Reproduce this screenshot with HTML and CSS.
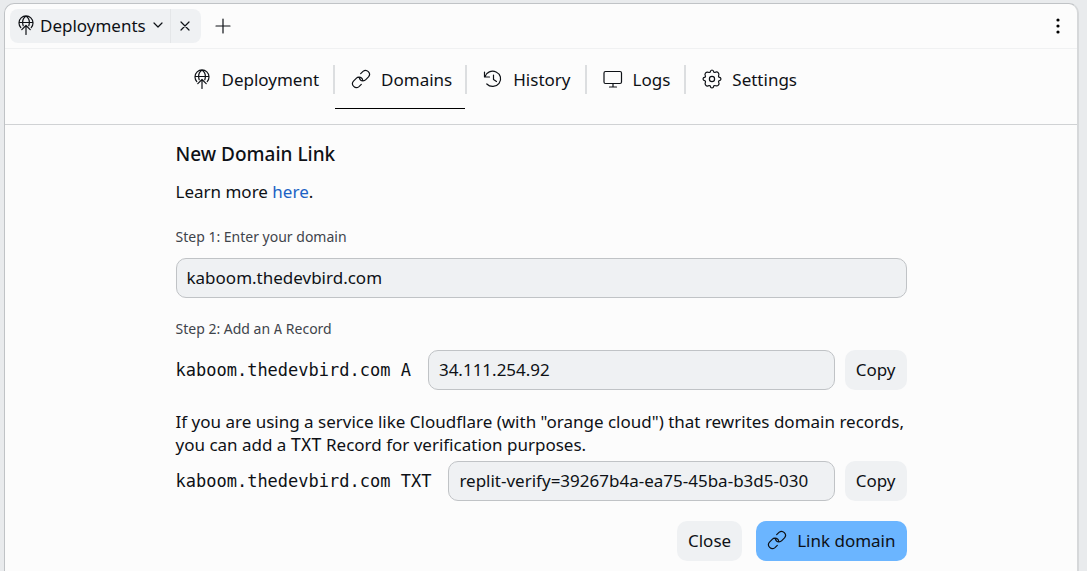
FILE: index.html
```html
<!DOCTYPE html>
<html lang="en">
<head>
<meta charset="utf-8">
<title>Deployments</title>
<link rel="stylesheet" href="styles.css">
</head>
<body>
<svg class="sprite" aria-hidden="true">
  <symbol id="deploy" viewBox="0 0 20 20">
    <path d="M4.800 12.600A7 7 0 1 1 15.200 12.600M3 7.500h14M7.200 10.800C6 7 7.200 3 10 1C12.800 3 14 7 12.800 10.800M10 19.500V10.500M5.800 14.700L10 10.500L14.200 14.700"/>
  </symbol>
  <symbol id="link" viewBox="0 0 20 20">
    <path d="M8.300 8.600a3.800 3.800 0 0 0 3.700 3.200a4 4 0 0 0 2.800-1.200l2.700-2.700a3.900 3.900 0 0 0-5.500-5.500l-2.300 2.300M11.700 11.400A3.800 3.800 0 0 0 8 8.200a4 4 0 0 0-2.800 1.200l-2.700 2.700a3.900 3.900 0 0 0 5.500 5.500l2.300-2.300"/>
  </symbol>
  <symbol id="history" viewBox="0 0 20 20">
    <path d="M1.500 3v5h5M1.900 7.800A8 7.600 0 1 1 3.800 15M10.500 6v4.500l3 2"/>
  </symbol>
  <symbol id="monitor" viewBox="0 0 20 20">
    <rect x="1" y="2.500" width="17.500" height="12" rx="1.500"/><path d="M10 14.500v3.500M6.500 18h7"/>
  </symbol>
  <symbol id="gear" viewBox="0 0 20 20">
    <path d="M8.200 3.100Q8.500 1 10 1T11.800 3.100L12.800 3.500Q14.900 2.300 16.200 3.600T16.500 7.200L16.900 8.200Q19 8.500 19 10T16.900 11.800L16.500 12.800Q17.700 14.900 16.400 16.200T12.800 16.500L11.800 16.900Q11.500 19 10 19T8.200 16.900L7.200 16.500Q5.100 17.700 3.800 16.400T3.500 12.800L3.100 11.800Q1 11.500 1 10T3.100 8.200L3.500 7.200Q2.300 5.100 3.600 3.800T7.200 3.500Z"/><circle cx="10" cy="10" r="2.600"/>
  </symbol>
</svg>
<main class="pane">
  <header class="tabbar">
    <div class="tab">
      <button class="tab-main" type="button"><svg class="icon"><use href="#deploy"/></svg>Deployments<svg class="chevron" viewBox="0 0 10 10"><path d="M1 3l4 4l4-4"/></svg></button>
      <button class="tab-close" type="button" aria-label="Close tab"><svg viewBox="0 0 10 10"><path d="M1 1l8 8M9 1l-8 8"/></svg></button>
    </div>
    <button class="tab-add" type="button" aria-label="New tab"><svg viewBox="0 0 16 16"><path d="M8 1v14M1 8h14"/></svg></button>
    <button class="tab-menu" type="button" aria-label="More options"><svg viewBox="0 0 4 16"><circle cx="2" cy="2" r="1.600"/><circle cx="2" cy="8" r="1.600"/><circle cx="2" cy="14" r="1.600"/></svg></button>
  </header>
  <nav class="sections">
    <div class="sections-inner">
      <a class="section" href="#deployment"><svg class="icon"><use href="#deploy"/></svg>Deployment</a>
      <a class="section active" href="#domains" aria-current="page"><svg class="icon"><use href="#link"/></svg>Domains</a>
      <a class="section" href="#history-log"><svg class="icon"><use href="#history"/></svg>History</a>
      <a class="section" href="#logs"><svg class="icon"><use href="#monitor"/></svg>Logs</a>
      <a class="section" href="#settings"><svg class="icon"><use href="#gear"/></svg>Settings</a>
    </div>
  </nav>
  <form class="content">
    <h1>New Domain Link</h1>
    <p class="learn">Learn more <a href="#docs">here</a>.</p>
    <label class="step" for="domain">Step 1: Enter your domain</label>
    <input class="field" id="domain" type="text" value="kaboom.thedevbird.com">
    <p class="step step-two">Step 2: Add an <span class="mono">A</span> Record</p>
    <div class="record">
      <label class="mono" for="a-record">kaboom.thedevbird.com A</label>
      <input class="field" id="a-record" type="text" value="34.111.254.92" readonly>
      <button class="button" type="button">Copy</button>
    </div>
    <p class="note">If you are using a service like Cloudflare (with "orange cloud") that rewrites domain records, you can add a <span class="mono">TXT</span> Record for verification purposes.</p>
    <div class="record">
      <label class="mono" for="txt-record">kaboom.thedevbird.com TXT</label>
      <input class="field" id="txt-record" type="text" value="replit-verify=39267b4a-ea75-45ba-b3d5-030" readonly>
      <button class="button" type="button">Copy</button>
    </div>
    <div class="actions">
      <button class="button" type="button">Close</button>
      <button class="button primary" type="submit"><svg class="icon"><use href="#link"/></svg>Link domain</button>
    </div>
  </form>
</main>
</body>
</html>
```
FILE: styles.css
```css
* { box-sizing: border-box; }

body {
  margin: 0;
  padding: 3px 8px 0 4px;
  background: #e9ebed;
  color: #0e1116;
  font: 17px/23px "Noto Sans", sans-serif;
}

button, input { font: inherit; color: inherit; }
button { border: 0; background: none; padding: 0; }
h1, p { margin: 0; }
.sprite { display: none; }

svg { fill: none; stroke: currentColor; stroke-width: 1.2; stroke-linecap: round; stroke-linejoin: round; flex: none; }
.icon { width: 20px; height: 20px; }
.mono { font-family: "DejaVu Sans Mono", monospace; }

.pane {
  min-height: calc(100vh - 3px);
  border: 1px solid #c0c3c6;
  border-width: 1px 2px 0 1px;
  border-right-color: #d6d8da;
  border-radius: 10px 10px 0 0;
  background: #fcfcfc;
}

.tabbar {
  display: flex;
  align-items: center;
  height: 45px;
  padding: 0 13px 0 5px;
  border-bottom: 1px solid #f0f1f2;
}
.tab { display: flex; height: 34px; border-radius: 8px; background: #eff1f3; }
.tab-main { display: flex; align-items: center; padding: 0 7px 2px 6px; gap: 4px; }
.chevron { width: 10px; height: 10px; margin-left: 3px; }
.tab-close { display: flex; align-items: center; padding: 0 11px 0 9px; border-left: 1px solid #e4e6e8; }
.tab-close svg { width: 10px; height: 10px; }
.tab-add { display: flex; margin-left: 14px; }
.tab-add svg { width: 16px; height: 16px; }
.tab-menu { display: flex; margin-left: auto; padding: 0 4px; }
.tab-menu svg { width: 4px; height: 16px; fill: #000; stroke: none; }

.sections { border-bottom: 1px solid #d0d2d4; padding: 0 16px 15px; }
.sections-inner { display: flex; max-width: 731px; margin: 0 auto; }
.section {
  display: flex;
  align-items: center;
  gap: 10px;
  height: 60px;
  padding: 0 16px;
  background: linear-gradient(#dcdee0, #dcdee0) right 16px / 2px 29px no-repeat;
  color: inherit;
  text-decoration: none;
}
.section:last-child { background: none; }
.section.active {
  padding-right: 15px;
  background:
    linear-gradient(#dcdee0, #dcdee0) right 16px / 2px 29px no-repeat,
    linear-gradient(#000, #000) left bottom / calc(100% - 2px) 1px no-repeat;
}

.content { display: flex; flex-direction: column; max-width: 731px; margin: 0 auto; padding: 17px 0 10px; }
h1 { font-size: 19px; line-height: 24px; font-weight: 500; }
.learn { margin-top: 14px; }
.learn a { color: #1b62c4; text-decoration: none; }
.step { margin-top: 24px; font-size: 14px; line-height: 20px; color: #3f444b; }
.field {
  width: 100%;
  min-width: 0;
  height: 40px;
  padding: 0 10px 2px;
  border: 1px solid #c0c3c6;
  border-radius: 10px;
  background: #eff1f3;
}
.step + .field { margin-top: 11px; }
.step-two { margin-top: 21px; }
.record { display: flex; align-items: center; gap: 10px; margin-top: 11px; }
.record label { padding-right: 7px; white-space: nowrap; }
.button { display: flex; align-items: center; justify-content: center; gap: 10px; height: 40px; padding: 0 11px 2px; border-radius: 10px; background: #eff1f3; white-space: nowrap; flex: none; }
.note { margin-top: 20px; }
.note + .record { margin-top: 4px; }
.actions { display: flex; justify-content: flex-end; gap: 14px; margin-top: 20px; }
.primary { background: #6bb5ff; }
```
